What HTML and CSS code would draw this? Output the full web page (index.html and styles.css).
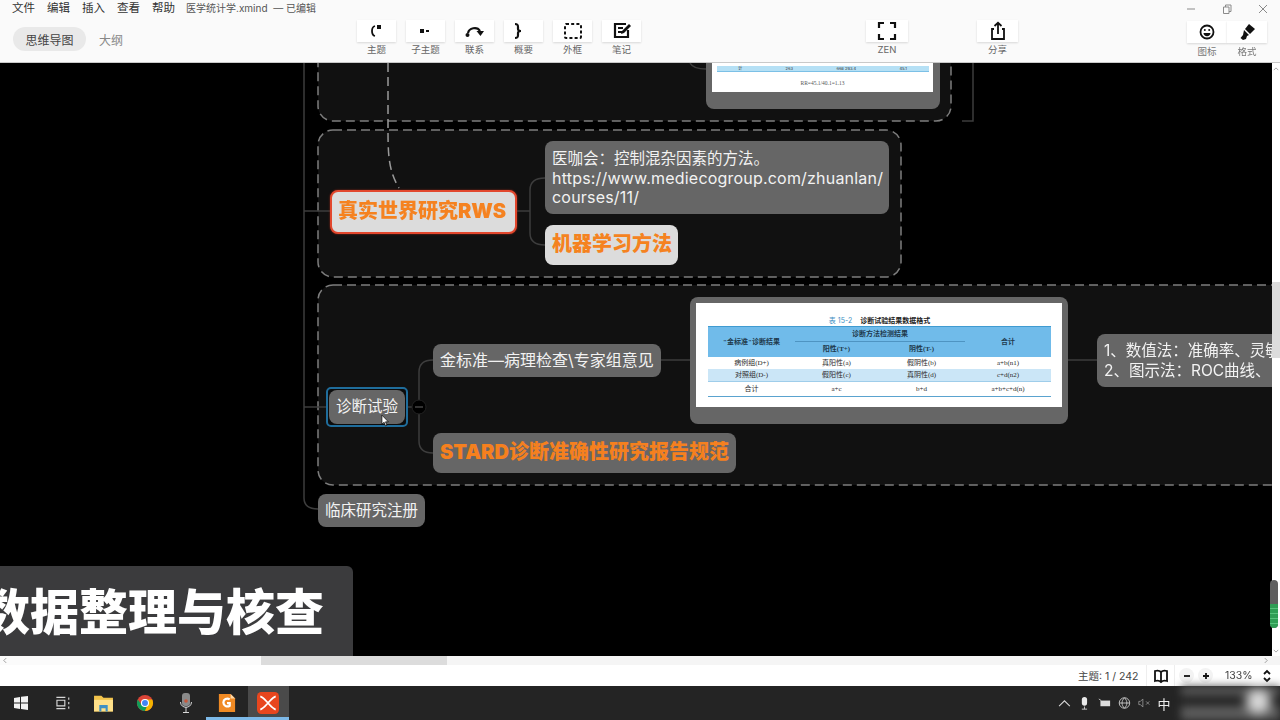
FILE: index.html
```html
<!DOCTYPE html>
<html lang="zh-CN">

<head>
    <meta charset="UTF-8" />
    <title>医学统计学.xmind</title>
    <link rel="stylesheet" href="styles.css">
</head>

<body>
    <div class="app">
        <header class="topbar">
            <div class="left-col">
                <nav class="menu">
                    <span>文件</span><span>编辑</span><span>插入</span><span>查看</span><span>帮助</span>
                    <span class="doc-title">医学统计学.xmind &nbsp;— 已编辑</span>
                </nav>
                <div class="tabs">
                    <span class="tab active">思维导图</span>
                    <span class="tab">大纲</span>
                </div>
            </div>

            <div class="tools">
                <div class="tool"><div class="tool-btn"><svg viewBox="0 0 20 20"><path class="ink" d="M8 5c-2 .5-3 2-3 5s1 4.5 3 5" /><rect class="solid" x="10" y="4" width="4" height="4" /></svg></div><span>主题</span></div>
                <div class="tool"><div class="tool-btn"><svg viewBox="0 0 20 20"><rect class="solid" x="4" y="8" width="4" height="4" /><rect class="solid" x="10" y="9" width="3" height="2" /></svg></div><span>子主题</span></div>
                <div class="tool"><div class="tool-btn"><svg viewBox="0 0 20 20"><path class="ink heavy" d="M3 12c1-5 9-7 12-2" /><path class="solid" d="M11.500 10h7.500l-3.500 5z" /><circle class="solid" cx="2.500" cy="14" r="2" /></svg></div><span>联系</span></div>
                <div class="tool"><div class="tool-btn brace"><svg viewBox="0 0 20 20"><path class="ink heavy" d="M6 3c3 0 3 1 3 3v2c0 1 1 2 3 2-2 0-3 1-3 2v2c0 2 0 3-3 3" /></svg></div><span>概要</span></div>
                <div class="tool"><div class="tool-btn"><svg viewBox="0 0 20 20"><rect class="dashed" x="2" y="3" width="16" height="14" rx="1" /></svg></div><span>外框</span></div>
                <div class="tool"><div class="tool-btn"><svg viewBox="0 0 20 20"><path class="ink heavy" d="M16 9v7H3V3h11M6 7h5M6 11h4" /><path class="solid" d="M17 3l2 2-7 7-3 1 1-3z" /></svg></div><span>笔记</span></div>
            </div>

            <div class="tool zen"><div class="tool-btn"><svg viewBox="0 0 20 20"><path class="ink heavy" d="M7 2H2v5M13 2h5v5M7 18H2v-5M13 18h5v-5" /></svg></div><span>ZEN</span></div>
            <div class="tool share"><div class="tool-btn"><svg viewBox="0 0 20 20"><path class="ink" d="M6 8H4v10h12V8h-2M10 13V2M6.500 5L10 1.800 13.500 5" /></svg></div><span>分享</span></div>

            <div class="right-col">
                <div class="win-controls">
                    <svg viewBox="0 0 10 10"><path class="thin" d="M1 5h8" /></svg>
                    <svg viewBox="0 0 10 10"><path class="thin" d="M1.500 3h5.500v6.500H1.500zM3.500 3V1h5.500v6.500H7" /></svg>
                    <svg viewBox="0 0 10 10"><path class="thin" d="M1 1l8 8M9 1l-8 8" /></svg>
                </div>
                <div class="style-tools">
                    <div class="tool"><div class="tool-btn"><svg viewBox="0 0 20 20"><circle class="ink" cx="10" cy="10" r="6.500" /><circle class="solid" cx="7.800" cy="8" r="1" /><circle class="solid" cx="12.200" cy="8" r="1" /><path class="solid" d="M6.500 11h7c0 2-1.500 3.200-3.500 3.200S6.500 13 6.500 11z" /></svg></div><span>图标</span></div>
                    <div class="tool"><div class="tool-btn"><svg viewBox="0 0 20 20"><path class="solid" d="M12 2l6 5-5 5-5-5z" /><path class="solid" d="M7 8l5 5-2 1-1 3-3 1-2.500-2L6 13z" /></svg></div><span>格式</span></div>
                </div>
            </div>
        </header>

        <main class="workspace">
            <section class="canvas">
                <svg class="links" viewBox="0 63 1272 593">
                    <rect class="boundary" x="318" y="20" width="633" height="101" rx="15" />
                    <rect class="boundary" x="318" y="130" width="583" height="147" rx="15" />
                    <rect class="boundary" x="318" y="285" width="1000" height="200" rx="15" />
                    <path class="link" d="M304 63V498q0 11 14 11M304 211h26M304 407h26" />
                    <path class="link" d="M690 63q3 6 16 6M962 121h11V63" />
                    <path class="link" d="M517 211h13M530 211V190q0-12 15-12M530 211v22q0 12 15 12" />
                    <path class="link" d="M408 407h11M419 407V372q0-12 14-12M419 407v34q0 12 14 12M661 360h29M1068 360h29" />
                    <path class="rel" d="M388 63V125c0 28 0 45 11 63" />
                    <circle class="collapse" cx="419" cy="407" r="7" />
                    <path class="collapse-bar" d="M415 407h8" />
                </svg>

                <div class="node image-node node-top">
                    <div class="sheet sheet-top">
                        <div class="band-row"><span>计</span><span>263</span><span>668 293.4</span><span>45.1</span></div>
                        <p class="formula">RR=45.1/40.1=1.13</p>
                    </div>
                </div>

                <div class="node node-rws">真实世界研究RWS</div>
                <div class="node node-link"><p>医咖会：控制混杂因素的方法。</p><p class="url">https://www.mediecogroup.com/zhuanlan/</p><p class="url">courses/11/</p></div>
                <div class="node node-ml">机器学习方法</div>

                <div class="selection"><div class="node node-diag">诊断试验</div></div>
                <div class="node node-gold">金标准—病理检查\专家组意见</div>
                <div class="node node-stard">STARD诊断准确性研究报告规范</div>

                <div class="node image-node node-table">
                    <div class="sheet sheet-table">
                        <p class="caption"><span>表 15-2</span>诊断试验结果数据格式</p>
                        <table>
                            <colgroup><col class="c1"><col class="c2"><col class="c3"><col class="c4"></colgroup>
                            <thead>
                                <tr>
                                    <th rowspan="2">"金标准"诊断结果</th>
                                    <th colspan="2" class="span-head">诊断方法检测结果</th>
                                    <th rowspan="2">合计</th>
                                </tr>
                                <tr>
                                    <th>阳性(T+)</th>
                                    <th>阴性(T-)</th>
                                </tr>
                            </thead>
                            <tbody>
                                <tr><td>病例组(D+)</td><td>真阳性(a)</td><td>假阴性(b)</td><td>a+b(n1)</td></tr>
                                <tr class="tint"><td>对照组(D-)</td><td>假阳性(c)</td><td>真阴性(d)</td><td>c+d(n2)</td></tr>
                                <tr class="sum"><td>合计</td><td>a+c</td><td>b+d</td><td>a+b+c+d(n)</td></tr>
                            </tbody>
                        </table>
                    </div>
                </div>

                <div class="node node-methods">1、数值法：准确率、灵敏度<br>2、图示法：ROC曲线、</div>
                <div class="node node-register">临床研究注册</div>

                <div class="slide-title">数据整理与核查</div>

                <svg class="cursor" viewBox="0 0 10 14"><path d="M1 1v10l2.500-2 1.500 4 1.600-.7L5 8.500h3.200z" /></svg>
            </section>

            <aside class="vscroll">
                <svg class="arrow-up" viewBox="0 0 8 5"><path class="thin" d="M1 4l3-3 3 3" /></svg>
                <div class="vthumb"></div>
                <svg class="arrow-down" viewBox="0 0 8 5"><path class="thin" d="M1 1l3 3 3-3" /></svg>
            </aside>
            <div class="recorder-pill"><div class="recorder-level"></div></div>
        </main>

        <div class="hscroll">
            <div class="hscroll-left"><svg viewBox="0 0 5 8"><path class="thin" d="M4 1L1 4l3 3" /></svg></div>
            <div class="hthumb"></div>
            <svg class="arrow-right" viewBox="0 0 5 8"><path class="thin" d="M1 1l3 3-3 3" /></svg>
        </div>

        <footer class="statusbar">
            <span class="topic-count">主题: 1 / 242</span>
            <div class="map-btn"><svg viewBox="0 0 16 16"><path class="ink" d="M8 4C6.500 2.500 4 2.500 2 3v10c2-.5 4.500-.5 6 1 1.500-1.500 4-1.500 6-1V3c-2-.5-4.500-.5-6 1zM8 4v10" /></svg></div>
            <div class="zoom-btn"><svg viewBox="0 0 10 10"><path class="ink" d="M2 5h6" /></svg></div>
            <div class="zoom-btn"><svg viewBox="0 0 10 10"><path class="ink" d="M2 5h6M5 2v6" /></svg></div>
            <span class="zoom-value">133%</span>
            <svg class="updown" viewBox="0 0 10 14"><path class="ink" d="M2 5l3-3 3 3M2 9l3 3 3-3" /></svg>
        </footer>

        <div class="taskbar">
            <div class="task-icons">
                <div class="task"><svg viewBox="0 0 16 16"><path class="win" d="M1 3l6-1v5.500H1zM8 1.800L15 1v6.500H8zM1 8.500h6V14l-6-1zM8 8.500h7V15l-7-1z" /></svg></div>
                <div class="task"><svg viewBox="0 0 16 16"><path class="tray-line" d="M3 3h8M3 13h8M3.500 5.500h7v5h-7zM14 3v2M14 7v2M14 11v2" /></svg></div>
                <div class="task task-wide"><svg viewBox="0 0 20 18"><path fill="#f3c44c" d="M1 2h7l2 2h9v13H1z" /><path fill="#ffe08a" d="M1 6h18v11H1z" /><path fill="#3f8fc4" d="M6 11h8v6h-2v-3H8v3H6z" /></svg></div>
                <div class="task"><svg viewBox="0 0 20 20"><circle cx="10" cy="10" r="9" fill="#db4437" /><path fill="#0f9d58" d="M10 19a9 9 0 0 1-8-13l5 7 5 1z" /><path fill="#f4b400" d="M10 19a9 9 0 0 0 8-13h-8l3 6z" /><circle cx="10" cy="10" r="4.500" fill="#fff" /><circle cx="10" cy="10" r="3.300" fill="#4285f4" /></svg></div>
                <div class="task"><svg viewBox="0 0 14 22"><rect x="3" y="1" width="8" height="13" rx="3" fill="#8a8a8a" /><circle cx="7" cy="9" r="1.800" fill="#c9573a" /><path class="tray-line" d="M1.500 10c0 7 11 7 11 0M7 15v5M4 20.500h6" /></svg></div>
                <div class="task task-open"><svg viewBox="0 0 20 22"><path fill="#f08a24" d="M1 1h13l5 5v15H1z" /><path fill="#ffd9a8" d="M14 1l5 5h-5z" /><path class="doc-g" d="M13 7c-3-2-7 0-7 3.500S10 16 13 14v-3h-3" /></svg></div>
                <div class="task task-open task-active"><svg viewBox="0 0 20 20"><rect width="20" height="20" rx="4" fill="#e8461e" /><path class="xm" d="M3 4c3 1 5 4 7 6 2-2 4-5 7-6M3 16c3-1 5-4 7-6 2 2 4 5 7 6" /></svg></div>
            </div>
            <div class="tray">
                <svg viewBox="0 0 12 8"><path class="tray-line" d="M1 7l5-5 5 5" /></svg>
                <svg viewBox="0 0 12 16"><rect x="3" y="1" width="6" height="10" rx="3" fill="#e8e8e8" /><path class="tray-line" d="M6 12v3M3 15h6" /></svg>
                <svg viewBox="0 0 16 12"><rect x="3" y="3" width="12" height="7" fill="#ddd" /><path class="tray-line" d="M1 1l3 2" /></svg>
                <svg viewBox="0 0 16 16"><circle class="tray-line" cx="8" cy="8" r="6.500" /><path class="tray-line" d="M1.500 8h13M8 1.500c-4 4-4 9 0 13M8 1.500c4 4 4 9 0 13" /></svg>
                <svg viewBox="0 0 16 12"><path class="tray-dim" d="M1 4h2l3-3v10L3 8H1zM10 4l4 4M14 4l-4 4" /></svg>
                <span class="ime">中</span>
                <div class="blurred"></div>
            </div>
        </div>
    </div>
</body>

</html>
```

FILE: styles.css
```css
* {
    margin: 0;
    padding: 0;
    box-sizing: border-box;
}

html,
body {
    width: 1280px;
    height: 720px;
    overflow: hidden;
}

body {
    font-family: "Inter", "Noto Sans CJK SC", sans-serif;
    background: #000;
}

.app {
    display: flex;
    flex-direction: column;
    height: 720px;
    filter: blur(0.5px);
}

/* top bar */

.topbar {
    display: flex;
    align-items: flex-start;
    height: 63px;
    background: #fafafa;
    border-bottom: 1px solid #c9c9c9;
}

.left-col {
    width: 357px;
}

.menu {
    display: flex;
    height: 27px;
    padding: 1px 0 0 12px;
    font-size: 11.5px;
    line-height: 15px;
    color: #333;
}

.menu span {
    width: 35px;
}

.menu .doc-title {
    width: auto;
    margin-left: -1px;
    font-size: 10px;
    color: #555;
    white-space: nowrap;
}

.tabs {
    display: flex;
    margin-left: 13px;
}

.tab {
    display: flex;
    align-items: center;
    justify-content: center;
    height: 24px;
    padding: 0 13px;
    font-size: 12px;
    color: #888;
    white-space: nowrap;
}

.tab.active {
    width: 73px;
    padding: 0;
    background: #e9e9e9;
    border-radius: 12px;
    color: #444;
}

.tools {
    display: flex;
    gap: 10px;
}

.tool {
    display: flex;
    flex-direction: column;
    align-items: center;
    width: 39px;
    margin-top: 20px;
    font-size: 9.5px;
    line-height: 14px;
    color: #666;
}

.tool-btn {
    display: flex;
    align-items: center;
    justify-content: center;
    width: 100%;
    height: 22px;
    margin-bottom: 1px;
    background: #fff;
    box-shadow: 0 1px 2px rgba(0, 0, 0, 0.14);
}

.tool-btn svg {
    width: 20px;
    height: 20px;
}

.brace svg {
    margin-left: -9px;
}

.zen {
    width: 42px;
    margin-left: 225px;
}

.share {
    width: 41px;
    margin-left: 69px;
}

.right-col {
    width: 93px;
    margin-left: 169px;
}

.win-controls {
    display: flex;
    gap: 26px;
    height: 21px;
    padding-top: 4px;
    margin-left: -1px;
}

.win-controls svg {
    width: 10px;
    height: 10px;
}

.style-tools {
    display: flex;
    width: 80px;
}

.style-tools .tool {
    width: 40px;
    margin-top: 0;
    color: #777;
}

.style-tools .tool-btn {
    margin-bottom: 2px;
}

/* icon strokes */

.ink,
.thin,
.dashed,
.tray-line,
.tray-dim,
.doc-g,
.xm {
    fill: none;
}

.ink {
    stroke: #111;
    stroke-width: 1.8;
}

.heavy {
    stroke-width: 2.2;
}

.solid {
    fill: #111;
}

.dashed {
    stroke: #111;
    stroke-width: 2;
    stroke-dasharray: 3 2.2;
}

.thin {
    stroke: #8a8a8a;
    stroke-width: 1;
}

/* mind map */

.workspace {
    position: relative;
    display: flex;
    height: 593px;
}

.canvas {
    position: relative;
    width: 1272px;
    height: 593px;
    overflow: hidden;
    background: #000;
}

.links {
    position: absolute;
    left: 0;
    top: 0;
    width: 1272px;
    height: 593px;
    fill: none;
}

.boundary {
    fill: #111;
    stroke: #7d7d7d;
    stroke-width: 1.5;
    stroke-dasharray: 9 5;
}

.link {
    stroke: #3d3d3d;
    stroke-width: 1.5;
}

.rel {
    stroke: #9a9a9a;
    stroke-width: 1.5;
    stroke-dasharray: 9 5;
}

.collapse {
    fill: #000;
    stroke: #222;
}

.collapse-bar {
    stroke: #444;
    stroke-width: 1.5;
}

.node {
    position: absolute;
    display: flex;
    align-items: center;
    padding: 0 7px;
    background: #666;
    border-radius: 8px;
    font-size: 15.5px;
    line-height: 19.5px;
    color: #f2f2f2;
    white-space: nowrap;
}

.node-rws {
    left: 330px;
    top: 127px;
    width: 187px;
    height: 44px;
    padding-left: 6px;
    background: #dcdcdc;
    border: 2px solid #e2472d;
    box-shadow: 0 0 2px #a02a18;
    font-size: 20px;
    font-weight: 900;
    color: #f58220;
}

.node-link {
    display: block;
    left: 545px;
    top: 78px;
    width: 344px;
    height: 73px;
    padding-top: 8px;
}

.url {
    font-size: 16px;
    letter-spacing: 0.2px;
}

.node-ml {
    left: 545px;
    top: 162px;
    width: 133px;
    height: 40px;
    background: #dcdcdc;
    font-size: 20px;
    font-weight: 900;
    color: #f58220;
}

.selection {
    position: absolute;
    left: 326px;
    top: 324px;
    width: 82px;
    height: 40px;
    background: #0c0c0c;
    border: 2px solid #1f6d9c;
    border-radius: 5px;
}

.node-diag {
    left: 1px;
    top: 1px;
    width: 76px;
    height: 34px;
}

.node-gold {
    left: 433px;
    top: 281px;
    width: 228px;
    height: 33px;
    font-size: 16px;
}

.node-stard {
    left: 433px;
    top: 370px;
    width: 303px;
    height: 40px;
    font-size: 20px;
    font-weight: 900;
    color: #f5801e;
}

.node-methods {
    left: 1097px;
    top: 271px;
    width: 200px;
    height: 53px;
    padding-top: 1px;
    line-height: 20.5px;
}

.node-register {
    left: 318px;
    top: 431px;
    width: 107px;
    height: 33px;
}

.image-node {
    align-items: flex-start;
    padding: 6px;
}

.node-top {
    left: 706px;
    top: -40px;
    width: 234px;
    height: 86px;
}

.sheet {
    background: #fff;
    color: #333;
}

.sheet-top {
    display: flex;
    flex-direction: column;
    align-items: center;
    justify-content: flex-end;
    width: 221px;
    height: 63px;
    padding-bottom: 5px;
}

.band-row {
    display: flex;
    justify-content: space-around;
    width: 212px;
    height: 6px;
    margin-bottom: 8px;
    background: #b5e0f5;
    border-bottom: 1px solid #7cc0e6;
    font-size: 4px;
    line-height: 5px;
}

.formula {
    font-family: "Liberation Serif", serif;
    font-size: 5.5px;
    line-height: 7px;
    color: #555;
}

.node-table {
    left: 690px;
    top: 234px;
    width: 378px;
    height: 127px;
}

.sheet-table {
    width: 366px;
    height: 104px;
    padding: 13px 11px 0 12px;
}

.caption {
    height: 10px;
    font-size: 7px;
    font-weight: 700;
    line-height: 9px;
    text-align: center;
    color: #222;
}

.caption span {
    margin-right: 8px;
    font-weight: 400;
    color: #3f8fc4;
}

table {
    width: 343px;
    border-collapse: collapse;
    table-layout: fixed;
    font-family: "Liberation Serif", "Noto Sans CJK SC", serif;
    font-size: 7px;
    line-height: 8px;
    text-align: center;
    color: #2b2b2b;
}

.c1 {
    width: 87px;
}

.c2 {
    width: 83px;
}

.c3 {
    width: 87px;
}

.c4 {
    width: 86px;
}

thead tr {
    height: 15px;
    background: #70bbea;
}

thead {
    border-top: 1px solid #3f9bd1;
}

th {
    padding: 0;
    font-weight: 700;
    color: #1f3a4d;
}

.span-head {
    border-bottom: 1px solid #4e94c2;
}

td {
    padding: 0;
}

tbody tr {
    height: 12.5px;
}

.tint {
    background: #cbe6f7;
    border-bottom: 1px solid #9fcdea;
}

.sum {
    height: 15px;
    border-bottom: 1px solid #5aa3cf;
}

.slide-title {
    position: absolute;
    left: -29px;
    top: 503px;
    width: 382px;
    height: 90px;
    padding: 2px 0 0 10px;
    background: #3b3b3d;
    border-radius: 0 6px 0 0;
    font-size: 49px;
    font-weight: 900;
    line-height: 90px;
    color: #fff;
    white-space: nowrap;
}

.cursor {
    position: absolute;
    left: 381px;
    top: 351px;
    width: 9px;
    height: 13px;
    fill: #fff;
    stroke: #000;
    stroke-width: 0.8;
}

/* scrollbars */

.vscroll {
    position: relative;
    width: 8px;
    background: #fff;
}

.vscroll svg {
    position: absolute;
    left: 1px;
    width: 6px;
    height: 4px;
}

.arrow-up {
    top: 4px;
}

.arrow-down {
    bottom: 3px;
}

.vthumb {
    margin-top: 219px;
    height: 76px;
    background: #dcdcdc;
}

.recorder-pill {
    position: absolute;
    left: 1270px;
    top: 517px;
    display: flex;
    flex-direction: column;
    justify-content: flex-end;
    width: 8px;
    height: 48px;
    overflow: hidden;
    background: #5f5f5f;
    border-radius: 4px;
}

.recorder-level {
    height: 24px;
    background: repeating-linear-gradient(#2f9e55 0 4px, #57c27c 4px 5px);
}

.hscroll {
    display: flex;
    align-items: center;
    height: 9px;
    background: #f5f5f5;
}

.hscroll-left {
    width: 261px;
    height: 9px;
    padding-left: 3px;
    background: #fbfbfb;
}

.hscroll-left svg {
    display: block;
    width: 4px;
    height: 7px;
    margin-top: 1px;
}

.hthumb {
    width: 186px;
    height: 9px;
    background: #dcdcdc;
}

.arrow-right {
    width: 4px;
    height: 7px;
    margin-left: 817px;
}

/* status bar */

.statusbar {
    display: flex;
    align-items: center;
    height: 21px;
    padding-left: 1078px;
    background: #fff;
    font-size: 10.5px;
    color: #444;
    white-space: nowrap;
}

.topic-count {
    width: 68px;
}

.map-btn {
    display: flex;
    justify-content: center;
    width: 29px;
    height: 21px;
    padding-top: 3px;
    border-left: 1px solid #eee;
    border-right: 1px solid #eee;
}

.map-btn svg {
    width: 16px;
    height: 16px;
}

.zoom-btn {
    display: flex;
    align-items: center;
    justify-content: center;
    width: 15px;
    height: 15px;
    margin-left: 4px;
    background: #f3f3f3;
    border-radius: 50%;
}

.zoom-btn:first-of-type {
    margin-left: 7px;
}

.zoom-btn svg {
    width: 10px;
    height: 10px;
}

.zoom-value {
    margin-left: 12px;
}

.updown {
    width: 10px;
    height: 14px;
    margin-left: 9px;
}

/* taskbar */

.taskbar {
    display: flex;
    justify-content: space-between;
    flex: 1;
    background: #242424;
}

.task-icons {
    display: flex;
}

.task {
    display: flex;
    align-items: center;
    justify-content: center;
    width: 41.3px;
    border-bottom: 3px solid transparent;
    padding-top: 3px;
}

.task svg {
    width: 18px;
    height: 22px;
}

.task:first-child svg {
    width: 16px;
}

.task-wide svg {
    width: 21px;
}

.task-open {
    border-bottom-color: #7db9e8;
}

.task-active {
    background: #4a4a4a;
}

.task-active svg {
    width: 22px;
}

.win {
    fill: #f2f2f2;
}

.tray-line {
    stroke: #d8d8d8;
    stroke-width: 1;
}

.tray-dim {
    stroke: #999;
    stroke-width: 1;
}

.doc-g {
    stroke: #fff;
    stroke-width: 2.5;
}

.xm {
    stroke: #fff;
    stroke-width: 1.6;
}

.tray {
    display: flex;
    align-items: center;
    gap: 7px;
    width: 223px;
    padding-left: 1px;
}

.tray svg {
    width: 13px;
    height: 14px;
}

.ime {
    font-size: 13px;
    color: #eee;
}

.blurred {
    width: 100px;
    height: 34px;
    margin-left: 3px;
    background:
        radial-gradient(circle at 78% 45%, #d9d9d9 0 8%, transparent 22%),
        linear-gradient(#555 0 30%, #222 30% 58%, #5c5c5c 58% 100%);
    filter: blur(4px);
}
```
